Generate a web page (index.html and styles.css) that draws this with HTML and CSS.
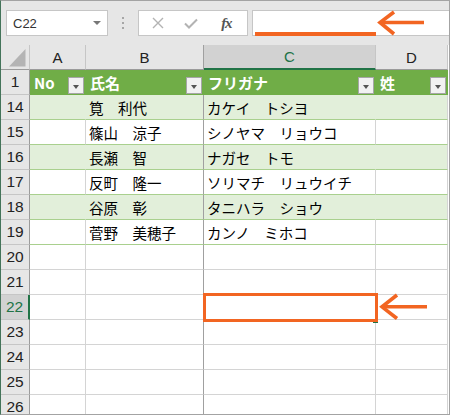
FILE: index.html
```html
<!DOCTYPE html>
<html lang="ja">
<head>
<meta charset="utf-8">
<link rel="stylesheet" href="styles.css">
</head>
<body>
<div class="frame">
  <div class="toolbar">
    <div class="namebox"><span>C22</span><span class="dd"></span></div>
    <div class="dots"><span class="dot"></span><span class="dot"></span><span class="dot"></span></div>
    <div class="fxbox">
      <span class="ic ic1"><svg width="12" height="12" viewBox="0 0 12 12"><path d="M1 1L11 11M11 1L1 11" stroke="#b3b3b3" stroke-width="1.4" fill="none"/></svg></span>
      <span class="ic ic2"><svg width="14" height="11" viewBox="0 0 14 11"><path d="M1 5.5L5 9.5L13 1.5" stroke="#b3b3b3" stroke-width="2" fill="none"/></svg></span>
      <span class="ic ic3 fx">fx</span>
    </div>
    <div class="input"></div>
  </div>
  <div class="grid">
    <div class="c corner"><svg width="28" height="24" viewBox="0 0 28 24"><polygon points="8,21.5 24.5,4 24.5,21.5" fill="#b4b4b4"/></svg></div>
    <div class="c ch">A</div>
    <div class="c ch dk">B</div>
    <div class="c ch sel">C</div>
    <div class="c ch">D</div>

    <div class="c rh">1</div>
    <div class="c hd"><span>No</span><span class="fb"><span class="tri"></span></span></div>
    <div class="c hd"><span>氏名</span><span class="fb"><span class="tri"></span></span></div>
    <div class="c hd"><span>フリガナ</span><span class="fb"><span class="tri"></span></span></div>
    <div class="c hd"><span>姓</span><span class="fb"><span class="tri"></span></span></div>

    <div class="c rh">14</div>
    <div class="c band"></div>
    <div class="c band dk">筧　利代</div>
    <div class="c band">カケイ　トシヨ</div>
    <div class="c band last"></div>

    <div class="c rh">15</div>
    <div class="c plain"></div>
    <div class="c plain dk">篠山　涼子</div>
    <div class="c plain">シノヤマ　リョウコ</div>
    <div class="c plain"></div>

    <div class="c rh">16</div>
    <div class="c band"></div>
    <div class="c band dk">長瀬　智</div>
    <div class="c band">ナガセ　トモ</div>
    <div class="c band last"></div>

    <div class="c rh">17</div>
    <div class="c plain"></div>
    <div class="c plain dk">反町　隆一</div>
    <div class="c plain">ソリマチ　リュウイチ</div>
    <div class="c plain"></div>

    <div class="c rh">18</div>
    <div class="c band"></div>
    <div class="c band dk">谷原　彰</div>
    <div class="c band">タニハラ　ショウ</div>
    <div class="c band last"></div>

    <div class="c rh">19</div>
    <div class="c plain"></div>
    <div class="c plain dk">菅野　美穂子</div>
    <div class="c plain">カンノ　ミホコ</div>
    <div class="c plain"></div>

    <div class="c rh">20</div><div class="c"></div><div class="c dk"></div><div class="c"></div><div class="c"></div>
    <div class="c rh">21</div><div class="c"></div><div class="c dk"></div><div class="c"></div><div class="c"></div>
    <div class="c rh sel">22</div><div class="c"></div><div class="c dk"></div><div class="c"></div><div class="c"></div>
    <div class="c rh">23</div><div class="c"></div><div class="c dk"></div><div class="c"></div><div class="c"></div>
    <div class="c rh">24</div><div class="c"></div><div class="c dk"></div><div class="c"></div><div class="c"></div>
    <div class="c rh">25</div><div class="c"></div><div class="c dk"></div><div class="c"></div><div class="c"></div>
    <div class="c rh">26</div><div class="c"></div><div class="c dk"></div><div class="c"></div><div class="c"></div>
  </div>
  <svg class="overlay" width="450" height="415" viewBox="0 0 450 415">
    <rect x="373" y="319" width="5" height="4" fill="#217346"/>
    <rect x="204.5" y="294.5" width="172" height="26" fill="none" stroke="#f26522" stroke-width="3"/>
    <rect x="255" y="32" width="121" height="4" fill="#f26522"/>
    <line x1="381" y1="22.5" x2="424" y2="22.5" stroke="#f26522" stroke-width="3.6"/>
    <polyline points="394,12 380,22.5 394,34" fill="none" stroke="#f26522" stroke-width="3.6"/>
    <line x1="383" y1="306.8" x2="427" y2="306.8" stroke="#f26522" stroke-width="3.6"/>
    <polyline points="397,295 382,306.8 397,318.5" fill="none" stroke="#f26522" stroke-width="3.6"/>
  </svg>
</div>
</body>
</html>
```

FILE: styles.css
```css
body {
  margin: 0;
}

.frame {
  width: 450px;
  height: 415px;
  box-sizing: border-box;
  border: 1px solid #a3a3a3;
  border-left-color: #44745a;
  position: relative;
  overflow: hidden;
  background: #fff;
  font-family: "Noto Sans CJK JP", sans-serif;
}

.toolbar {
  height: 44px;
  box-sizing: border-box;
  padding-top: 9px;
  background: #e6e6e6;
  display: flex;
  align-items: flex-start;
}

.namebox {
  margin-left: 5px;
  width: 102px;
  height: 26px;
  box-sizing: border-box;
  border: 1px solid #c6c6c6;
  background: #fff;
  display: flex;
  align-items: center;
  justify-content: space-between;
  padding: 0 6px 0 6px;
  font-family: "Liberation Sans", sans-serif;
  font-size: 13px;
  color: #333;
}

.dd {
  width: 0;
  height: 0;
  border-left: 4px solid transparent;
  border-right: 4px solid transparent;
  border-top: 4px solid #777;
}

.dots {
  width: 30px;
  height: 26px;
  display: flex;
  flex-direction: column;
  align-items: center;
  justify-content: center;
  gap: 3px;
}

.dot {
  width: 2px;
  height: 2px;
  background: #a6a6a6;
}

.fxbox {
  width: 110px;
  height: 26px;
  box-sizing: border-box;
  border: 1px solid #c6c6c6;
  background: #fff;
  display: flex;
  align-items: center;
}

.ic {
  display: flex;
  align-items: center;
  justify-content: center;
  height: 24px;
}

.ic1 { width: 38px; }
.ic2 { width: 30px; }
.ic3 { width: 42px; }

.fx {
  font-family: "Liberation Serif", serif;
  font-style: italic;
  font-weight: bold;
  font-size: 15px;
  color: #555;
  letter-spacing: -1px;
}

.input {
  flex: 1;
  margin-left: 4px;
  height: 26px;
  box-sizing: border-box;
  border: 1px solid #c6c6c6;
  border-right: none;
  background: #fff;
}

.grid {
  display: grid;
  grid-template-columns: 29px 56px 118px 172px 72px;
  grid-auto-rows: 25px;
}

.c {
  box-sizing: border-box;
  border-right: 1px solid #d4d4d4;
  border-bottom: 1px solid #d4d4d4;
  display: flex;
  align-items: center;
  padding-left: 3px;
  white-space: nowrap;
  overflow: hidden;
  font-size: 14.5px;
  color: #000;
}

.corner {
  background: #e6e6e6;
  border-right-color: #c6c6c6;
  border-bottom-color: #9b9b9b;
  padding: 0;
  align-items: flex-start;
}

.ch {
  background: #e6e6e6;
  border-right-color: #c6c6c6;
  border-bottom-color: #9b9b9b;
  justify-content: center;
  padding: 0;
  font-family: "Liberation Sans", sans-serif;
  font-size: 15px;
  color: #222;
}

.ch.sel {
  background: #d2d2d2;
  border-bottom: 2px solid #217346;
  color: #217346;
}

.rh {
  background: #e6e6e6;
  border-right-color: #9b9b9b;
  border-bottom-color: #c6c6c6;
  justify-content: center;
  padding: 0;
  font-family: "Liberation Sans", sans-serif;
  font-size: 15.5px;
  color: #222;
}

.rh.sel {
  background: #d2d2d2;
  color: #217346;
  border-right: 2px solid #217346;
}

.hd {
  background: #70ad47;
  border-right-color: #70ad47;
  border-bottom-color: #70ad47;
  color: #fff;
  font-weight: bold;
  font-size: 15px;
  justify-content: space-between;
  padding-left: 4px;
  padding-right: 1px;
}

.fb {
  width: 16px;
  height: 17px;
  box-sizing: border-box;
  border: 1px solid #a6a6a6;
  background: #f2f2f2;
  align-self: flex-end;
  margin-bottom: 0;
  display: flex;
  align-items: center;
  justify-content: center;
  padding-top: 3px;
}

.tri {
  width: 0;
  height: 0;
  border-left: 3.5px solid transparent;
  border-right: 3.5px solid transparent;
  border-top: 4px solid #555;
}

.band {
  background: #e2efda;
  border-right-color: #e2efda;
  border-bottom-color: #a9d08e;
}

.band.last {
  border-right-color: #d4d4d4;
}

.plain {
  border-bottom-color: #a9d08e;
}

.dk {
  border-right-color: #a0a0a0;
}

.overlay {
  position: absolute;
  left: -1px;
  top: -1px;
}
```
